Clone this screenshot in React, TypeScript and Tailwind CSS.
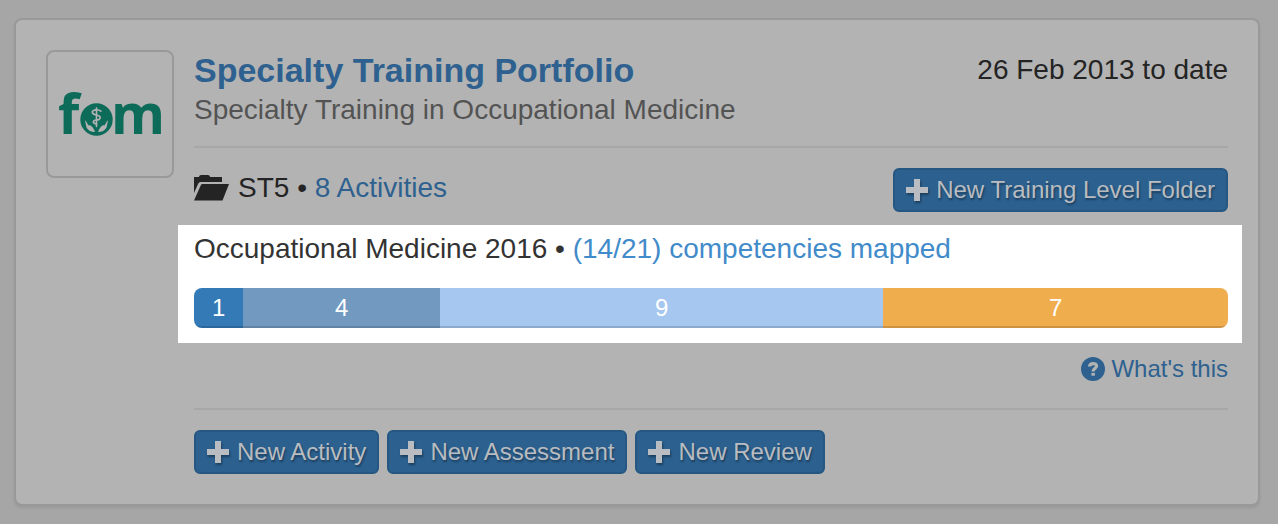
import type { ReactNode } from "react";

const segments = [
  { count: 1, color: "bg-[#337ab7]" },
  { count: 4, color: "bg-[#7299c0]" },
  { count: 9, color: "bg-[#a5c7f0]" },
  { count: 7, color: "bg-[#f0ad4e]" },
];

const total = segments.reduce((sum, s) => sum + s.count, 0);

function PlusIcon() {
  return (
    <svg
      viewBox="0 0 22 22"
      className="size-[22px] shrink-0 drop-shadow-[1px_2px_1px_rgba(0,0,0,0.35)]"
      fill="currentColor"
      aria-hidden="true"
    >
      <path d="M8 0h6v8h8v6h-8v8H8v-8H0V8h8z" />
    </svg>
  );
}

function FolderIcon() {
  return (
    <svg viewBox="0 0 36 26" className="h-[26px] w-9 shrink-0" fill="currentColor" aria-hidden="true">
      <path d="M0 2h4.800Q5.500 0 7 0h7q1.500 0 2.200 2H28v5H6.500Q5 7 4.300 8.500L0 18z" />
      <path d="M8.500 9H35L28.500 25.500H0L6.800 10.200Q7.300 9 8.500 9z" />
    </svg>
  );
}

function HelpIcon() {
  return (
    <svg viewBox="0 0 24 24" className="size-6 shrink-0" aria-hidden="true">
      <circle cx="12" cy="12" r="12" fill="currentColor" />
      <g fill="none" stroke="#b3b3b3" strokeWidth="3.200">
        <path d="M8.600 9.500C8.600 5.700 15.600 5.600 15.600 9c0 2.300-3.500 2.400-3.500 5.500" />
        <path d="M10.400 17.300h3.500" strokeWidth="2.800" />
      </g>
    </svg>
  );
}

function FomLogo() {
  return (
    <svg viewBox="0 0 124 124" className="size-full" role="img" aria-label="fom">
      <g fill="#0d6b59" className="font-['Open_Sans',sans-serif] text-[55px] font-bold">
        <text x="10" y="82">f</text>
        <text x="63" y="82">m</text>
      </g>
      <circle cx="48.500" cy="67.500" r="16.200" fill="#0d6b59" />
      {/* rod and serpent held by two hands */}
      <g fill="none" stroke="#b3b3b3" strokeLinecap="round">
        <path d="M48.500 56v18.500" strokeWidth="1.600" />
        <path
          d="M52.800 59.200Q51 57.500 48 57.800Q43.500 58.200 44.500 61Q45.200 62.400 48.500 63Q53 64 52 66.300Q51.200 68 48.500 68Q45.300 68.300 45.300 70.200Q45.500 71.500 48.500 72"
          strokeWidth="1.700"
        />
      </g>
      <g fill="#b3b3b3">
        <path d="M37 68.500Q38.200 68.500 39 71L40.800 73.800L41.800 73Q45.500 75 47 80Q41 80 38.500 75.500Z" />
        <path d="M60 68.500Q58.800 68.500 58 71L56.200 73.800L55.200 73Q51.500 75 50 80Q56 80 58.500 75.500Z" />
      </g>
    </svg>
  );
}

function ActionButton({ children }: { children: ReactNode }) {
  return (
    <button
      type="button"
      className="flex h-11 items-center gap-2 rounded-md border-2 border-[#255782] bg-[#2b608f] px-[11px] text-2xl whitespace-nowrap text-[#b9bcc0] [text-shadow:1px_2px_2px_rgba(0,0,0,0.35)]"
    >
      <PlusIcon />
      {children}
    </button>
  );
}

export default function App() {
  return (
    <main className="min-h-screen bg-[#a6a6a6] px-3.5 py-[18px] font-['Liberation_Sans',Arial,sans-serif] text-[28px] leading-10 text-[#242424]">
      <article className="mr-1 flex gap-5 rounded-lg border-2 border-[#999] bg-[#b3b3b3] p-[30px] shadow-[0_2px_3px_rgba(0,0,0,0.08)]">
        <div className="size-32 shrink-0 rounded-lg border-2 border-[#999]">
          <FomLogo />
        </div>

        <div className="min-w-0 flex-1">
          <header className="flex items-start justify-between border-b-2 border-[#a7a7a7] pb-4">
            <div>
              <h1 className="text-[34px] leading-10 font-bold">
                <a href="#portfolio" className="text-[#2e618f]">Specialty Training Portfolio</a>
              </h1>
              <p className="text-[#535353]">Specialty Training in Occupational Medicine</p>
            </div>
            <time dateTime="2013-02-26">26 Feb 2013 to date</time>
          </header>

          <div className="mt-5 flex items-start justify-between">
            <div className="flex items-center gap-2">
              <FolderIcon />
              <p>
                ST5 • <a href="#activities" className="text-[#2e618f]">8 Activities</a>
              </p>
            </div>
            <ActionButton>New Training Level Folder</ActionButton>
          </div>

          {/* Highlighted curriculum coverage */}
          <section className="mt-[13px] -mr-3.5 -ml-4 bg-white pt-1 pr-3.5 pb-[15px] pl-4 text-[#333]">
            <p>
              Occupational Medicine 2016 •{" "}
              <a href="#competencies" className="text-[#428bca]">(14/21) competencies mapped</a>
            </p>
            <div className="mt-[19px] flex h-10 overflow-hidden rounded-lg text-2xl leading-10 text-white">
              {segments.map((segment) => (
                <div
                  key={segment.count}
                  className={`text-center shadow-[inset_0_-2px_0_rgba(0,0,0,0.15)] ${segment.color}`}
                  style={{ width: `${(segment.count / total) * 100}%` }}
                >
                  {segment.count}
                </div>
              ))}
            </div>
          </section>

          <div className="flex justify-end border-b-2 border-[#a7a7a7] pt-1.5 pb-[19px]">
            <a href="#help" className="flex items-center gap-1.5 text-2xl leading-10 text-[#2e618f]">
              <HelpIcon />
              What's this
            </a>
          </div>

          <div className="mt-5 flex flex-wrap gap-2">
            <ActionButton>New Activity</ActionButton>
            <ActionButton>New Assessment</ActionButton>
            <ActionButton>New Review</ActionButton>
          </div>
        </div>
      </article>
    </main>
  );
}
